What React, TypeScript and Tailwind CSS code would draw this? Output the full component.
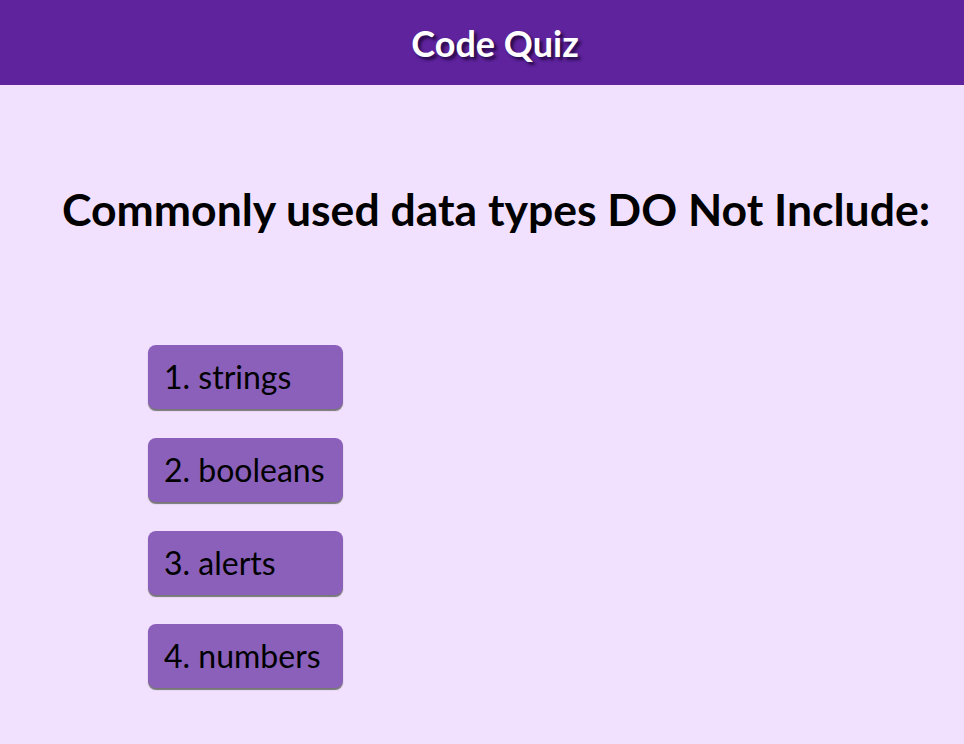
const choices = ["1. strings", "2. booleans", "3. alerts", "4. numbers"];

export default function App() {
  return (
    <div className="min-h-[744px] bg-[#f2e0ff] font-['Lato',sans-serif]">
      <header className="h-[85px] bg-[#5e239d] flex items-center justify-center pl-[26px]">
        <h1 className="text-[36px] font-bold text-white [text-shadow:3px_3px_3px_#2a0a4a]">
          Code Quiz
        </h1>
      </header>
      <main className="pt-[92px]">
        <h2 className="pl-[62px] text-[44.5px] font-bold text-black leading-[64px] whitespace-nowrap">
          Commonly used data types DO Not Include:
        </h2>
        <div className="mt-[104px] pl-[148px] flex flex-col gap-[29px]">
          {choices.map((c) => (
            <button
              key={c}
              className="w-[195px] h-[64px] text-left pl-4 rounded-lg bg-[#8a60ba] text-[32px] text-black shadow-[0_2px_1px_#777]"
            >
              {c}
            </button>
          ))}
        </div>
      </main>
    </div>
  );
}
